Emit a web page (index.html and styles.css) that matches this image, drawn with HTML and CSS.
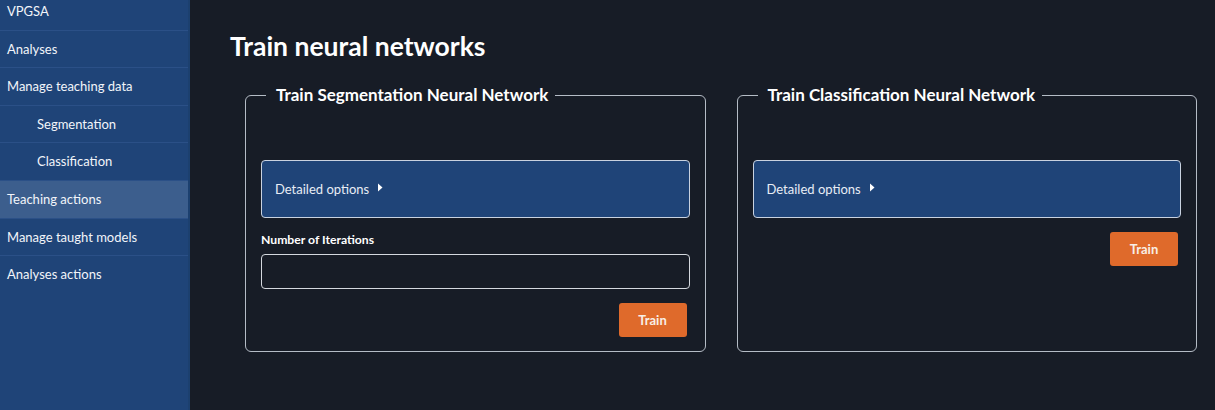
FILE: index.html
```html
<!DOCTYPE html>
<html lang="en">
<head>
<meta charset="utf-8">
<title>Train neural networks</title>
<link rel="stylesheet" href="styles.css">
</head>
<body>
<div class="app">
  <nav class="sidebar">
    <ul class="menu">
      <li class="item">VPGSA</li>
      <li class="item">Analyses</li>
      <li class="item">Manage teaching data</li>
      <li class="item sub">Segmentation</li>
      <li class="item sub">Classification</li>
      <li class="item active">Teaching actions</li>
      <li class="item">Manage taught models</li>
      <li class="item">Analyses actions</li>
    </ul>
  </nav>
  <main class="main">
    <h1 class="title">Train neural networks</h1>
    <div class="panels">
      <fieldset class="panel">
        <legend class="legend">Train Segmentation Neural Network</legend>
        <details class="options">
          <summary class="summary">Detailed options <svg class="caret" width="5" height="9" viewBox="0 0 5 9"><path d="M0 0.5 L4.5 4.5 L0 8.5 Z" fill="#ffffff"/></svg></summary>
        </details>
        <label class="field-label" for="iters">Number of Iterations</label>
        <input class="field-input" id="iters" type="text">
        <div class="actions"><button class="btn">Train</button></div>
      </fieldset>
      <fieldset class="panel">
        <legend class="legend">Train Classification Neural Network</legend>
        <details class="options">
          <summary class="summary">Detailed options <svg class="caret" width="5" height="9" viewBox="0 0 5 9"><path d="M0 0.5 L4.5 4.5 L0 8.5 Z" fill="#ffffff"/></svg></summary>
        </details>
        <div class="actions"><button class="btn">Train</button></div>
      </fieldset>
    </div>
  </main>
</div>
</body>
</html>
```

FILE: styles.css
```css
* { box-sizing: border-box; }
html, body {
  margin: 0;
  padding: 0;
  height: 100%;
  background: #171c26;
  font-family: Lato, "Open Sans", sans-serif;
  color: #ffffff;
  overflow: hidden;
}
.app {
  display: flex;
  height: 410px;
}
.sidebar {
  width: 190px;
  flex: 0 0 190px;
  background: #1f4478;
  border-right: 2px solid #1c406f;
  overflow: hidden;
}
.menu {
  list-style: none;
  margin: -7px 0 0 0;
  padding: 0;
}
.item {
  font-size: 13px;
  line-height: 20.6px;
  padding: 8px 7px;
  border-bottom: 1px solid #2b5087;
  color: #f2f5fa;
}
.item:last-child { border-bottom: none; }
.item.sub { padding-left: 37px; }
.item.active { background: #3c5e8d; }
.main {
  flex: 1;
  padding: 31px 18px 0 40px;
}
.title {
  margin: 0 0 23px 0;
  font-size: 26.5px;
  line-height: 30px;
  font-weight: 700;
  color: #ffffff;
}
.panels {
  display: grid;
  grid-template-columns: 1fr 1fr;
  column-gap: 31px;
  margin-left: 15px;
}
.panel {
  margin: 0;
  border: 1px solid #b5bcc6;
  border-radius: 6px;
  padding: 0 15px 14px 15px;
  display: flex;
  flex-direction: column;
  min-width: 0;
}
.legend {
  font-size: 17px;
  line-height: 22px;
  font-weight: 700;
  padding: 0 7px 0 10px;
  margin-left: 5px;
  color: #ffffff;
}
.options {
  margin-top: 54px;
  background: #1f4478;
  border: 1px solid #c9d2e0;
  border-radius: 4px;
}
.summary {
  list-style: none;
  height: 56px;
  display: flex;
  align-items: center;
  padding: 0 13px;
  font-size: 13px;
  color: #e8edf5;
  cursor: pointer;
}
.summary::-webkit-details-marker { display: none; }
.caret { margin-left: 9px; margin-top: -3px; }
.field-label {
  margin-top: 14px;
  font-size: 12.2px;
  line-height: 16px;
  font-weight: 700;
  color: #ffffff;
}
.field-input {
  margin-top: 6px;
  height: 35px;
  background: #171c26;
  border: 1px solid #d4d8de;
  border-radius: 4px;
  color: #ffffff;
  font-family: inherit;
}
.actions {
  display: flex;
  justify-content: flex-end;
  margin-top: 14px;
  padding-right: 3px;
}
.btn {
  width: 68px;
  height: 34px;
  background: #df6a2b;
  border: none;
  border-radius: 3px;
  font-family: Lato, sans-serif;
  font-weight: 700;
  font-size: 13px;
  color: #f8eee6;
}
```
